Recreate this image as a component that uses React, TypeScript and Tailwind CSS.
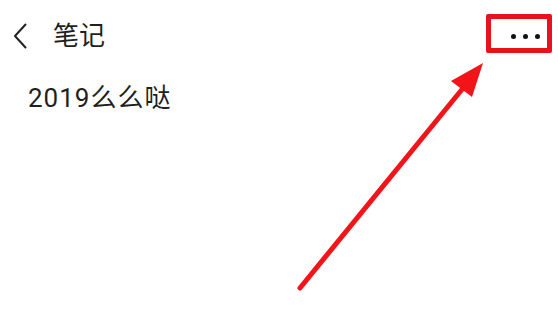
import React from "react";

export default function App() {
  const font = { fontFamily: 'Roboto, "Noto Sans CJK SC", sans-serif' };
  return (
    <div className="relative w-[558px] h-[314px] bg-white overflow-hidden text-[#1f1f1f]" style={font}>
      <div className="flex items-center h-[72px] pl-[13px] pr-[18px]">
        <svg width="14" height="26" viewBox="0 0 14 26" className="shrink-0">
          <path d="M12.5 1.5 L2 13 L12.5 24.5" fill="none" stroke="#222" strokeWidth="2" strokeLinecap="round" strokeLinejoin="round" />
        </svg>
        <div className="ml-[26px] text-[26px] leading-none">笔记</div>
        <div className="ml-auto flex items-center gap-[7px]">
          <span className="w-[5px] h-[5px] rounded-full bg-[#111]" />
          <span className="w-[5px] h-[5px] rounded-full bg-[#111]" />
          <span className="w-[5px] h-[5px] rounded-full bg-[#111]" />
        </div>
      </div>
      <div className="pl-[28px] pt-[13px] text-[26px] leading-none tracking-[1px]">2019么么哒</div>

      <div className="absolute left-[486px] top-[14px] w-[66px] h-[39px] border-[5px] border-[#e8121c] rounded-[2px]" />
      <svg className="absolute left-0 top-0" width="558" height="314" viewBox="0 0 558 314">
        <line x1="300" y1="288" x2="468" y2="82" stroke="#f21419" strokeWidth="5" strokeLinecap="round" />
        <polygon points="483,63 451,81 472,97" fill="#f21419" />
      </svg>
    </div>
  );
}
